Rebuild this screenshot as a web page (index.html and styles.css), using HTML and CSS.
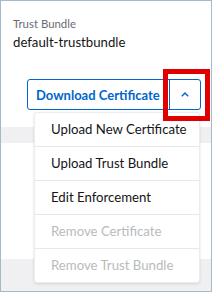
FILE: index.html
```html
<!DOCTYPE html>
<html>
<head>
<meta charset="utf-8">
<link rel="stylesheet" href="styles.css">
</head>
<body>
<div class="frame">
  <section class="card card-top">
    <div class="field">
      <div class="label">Trust Bundle</div>
      <div class="value">default-trustbundle</div>
    </div>
    <div class="actions">
      <div class="split">
        <button class="split-main">Download Certificate</button>
        <button class="split-toggle" aria-label="More actions">
          <svg width="8" height="5" viewBox="0 0 8 5"><polyline points="0.8,4.2 4,1 7.2,4.2" fill="none" stroke="#0066cc" stroke-width="1.4"/></svg>
        </button>
      </div>
    </div>
  </section>
  <section class="card card-bottom"></section>

  <ul class="menu">
    <li class="item">Upload New Certificate</li>
    <li class="item">Upload Trust Bundle</li>
    <li class="item">Edit Enforcement</li>
    <li class="item disabled">Remove Certificate</li>
    <li class="item disabled">Remove Trust Bundle</li>
  </ul>
  <div class="highlight"></div>
</div>
</body>
</html>
```

FILE: styles.css
```css
* { box-sizing: border-box; }
html, body { margin: 0; padding: 0; }
body {
  font-family: "Lato", "Liberation Sans", sans-serif;
  width: 212px;
  height: 292px;
  overflow: hidden;
}
.frame {
  position: relative;
  width: 212px;
  height: 292px;
  border: 1px solid #a3bac7;
  background: #f0f0f2;
}
.card {
  background: #ffffff;
}
.card-top {
  height: 126px;
  padding: 15px 10px 0 12px;
}
.card-bottom {
  height: 116px;
  margin-top: 16px;
}
.label {
  font-size: 11.4px;
  line-height: 16px;
  color: #6a6e73;
}
.value {
  font-size: 13.2px;
  line-height: 20px;
  color: #151515;
  margin-top: 0;
}
.actions {
  display: flex;
  justify-content: flex-end;
  margin-top: 27px;
}
.split {
  display: flex;
  height: 31px;
  border: 1px solid #0066cc;
  border-radius: 3px;
}
.split button {
  font-family: inherit;
  background: transparent;
  border: 0;
  margin: 0;
  color: #0066cc;
  cursor: pointer;
}
.split-main {
  width: 142px;
  padding: 0 0 0 8px;
  text-align: left;
  white-space: nowrap;
  font-size: 13px;
  font-weight: 700;
  border-right: 1px solid #0066cc !important;
}
.split-toggle {
  width: 30px;
  padding: 0;
  display: flex;
  align-items: center;
  justify-content: center;
}
.menu {
  position: absolute;
  left: 33px;
  top: 111px;
  width: 166px;
  margin: 0;
  padding: 0;
  list-style: none;
  background: #ffffff;
  border: 1px solid #ececec;
  border-radius: 3px;
  box-shadow: 0 1px 3px rgba(0,0,0,0.12);
}
.item {
  height: 34px;
  line-height: 33px;
  padding-left: 16px;
  font-size: 13.2px;
  color: #151515;
  border-bottom: 1px solid #e8e8e8;
}
.item:last-child { border-bottom: 0; height: 33px; }
.item.disabled { color: #b8bbbe; }
.highlight {
  position: absolute;
  left: 162px;
  top: 68px;
  width: 47px;
  height: 52px;
  border: 5px solid #e10000;
}
```
